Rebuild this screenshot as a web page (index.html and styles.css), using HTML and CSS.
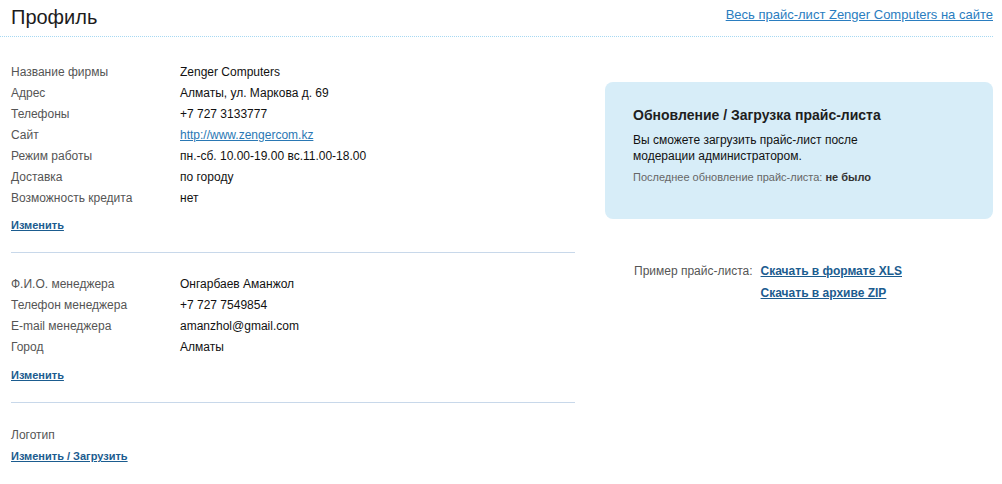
FILE: index.html
```html
<!DOCTYPE html>
<html lang="ru">
<head>
<meta charset="utf-8">
<title>Профиль</title>
<link rel="stylesheet" href="styles.css">
</head>
<body>
<header class="top">
  <h1 class="title">Профиль</h1>
  <a class="site-link" href="#">Весь прайс-лист Zenger Computers на сайте</a>
</header>
<main class="main">
  <div class="left">
    <section class="sec sec-first">
      <div class="row"><span class="lbl">Название фирмы</span><span class="val">Zenger Computers</span></div>
      <div class="row"><span class="lbl">Адрес</span><span class="val">Алматы, ул. Маркова д. 69</span></div>
      <div class="row"><span class="lbl">Телефоны</span><span class="val">+7 727 3133777</span></div>
      <div class="row"><span class="lbl">Сайт</span><span class="val"><a class="plain-link" href="#">http://www.zengercom.kz</a></span></div>
      <div class="row"><span class="lbl">Режим работы</span><span class="val">пн.-сб. 10.00-19.00 вс.11.00-18.00</span></div>
      <div class="row"><span class="lbl">Доставка</span><span class="val">по городу</span></div>
      <div class="row"><span class="lbl">Возможность кредита</span><span class="val">нет</span></div>
      <a class="edit" href="#">Изменить</a>
    </section>
    <section class="sec sec-second">
      <div class="row"><span class="lbl">Ф.И.О. менеджера</span><span class="val">Онгарбаев Аманжол</span></div>
      <div class="row"><span class="lbl">Телефон менеджера</span><span class="val">+7 727 7549854</span></div>
      <div class="row"><span class="lbl">E-mail менеджера</span><span class="val">amanzhol@gmail.com</span></div>
      <div class="row"><span class="lbl">Город</span><span class="val">Алматы</span></div>
      <a class="edit" href="#">Изменить</a>
    </section>
    <section class="sec sec-third">
      <div class="row"><span class="lbl">Логотип</span></div>
      <a class="edit edit-logo" href="#">Изменить / Загрузить</a>
    </section>
  </div>
  <aside class="right">
    <div class="upload-box">
      <h2 class="box-title">Обновление / Загрузка прайс-листа</h2>
      <p class="box-text">Вы сможете загрузить прайс-лист после<br>модерации администратором.</p>
      <p class="box-note">Последнее обновление прайс-листа: <b>не было</b></p>
    </div>
    <div class="sample">
      <span class="sample-lbl">Пример прайс-листа:</span>
      <a class="dl" href="#">Скачать в формате XLS</a>
      <span></span>
      <a class="dl" href="#">Скачать в архиве ZIP</a>
    </div>
  </aside>
</main>
</body>
</html>
```
FILE: styles.css
```css
* { box-sizing: border-box; }
html, body { margin: 0; padding: 0; background: #fff; }
body {
  font-family: "Liberation Sans", Arial, sans-serif;
  color: #111;
  width: 1002px;
}
.top {
  display: flex;
  justify-content: space-between;
  align-items: flex-start;
  height: 37px;
  padding: 0 9px 0 11px;
  background: repeating-linear-gradient(to right, #a6d8f2 0 1px, #ffffff 1px 2px) left bottom / 993px 1px no-repeat;
}
.title {
  margin: 0;
  padding-top: 5px;
  font-size: 20px;
  line-height: 24px;
  font-weight: normal;
  color: #1c1c1c;
}
.site-link {
  margin-top: 7px;
  font-size: 13px;
  line-height: 16px;
  color: #2a7dc0;
}
.main {
  display: flex;
  align-items: flex-start;
}
.left {
  width: 575px;
  padding-left: 11px;
}
.sec { border-bottom: 1px solid #c8d8ea; }
.sec-first { padding: 25px 0 19px; }
.sec-second { padding: 21px 0 19px; }
.sec-third { padding: 22px 0 0; border-bottom: none; }
.row {
  display: flex;
  font-size: 12px;
  line-height: 21px;
}
.lbl { width: 169px; color: #555; flex: none; }
.val { color: #111; }
.plain-link { color: #2a78b4; }
.edit {
  display: block;
  margin-top: 8px;
  font-size: 11px;
  line-height: 16px;
  font-weight: bold;
  color: #1b5c8f;
  width: max-content;
}
.sec-second .edit { margin-top: 9px; }
.sec-third .edit-logo { margin-top: 2px; }
.right {
  margin-left: 30px;
  width: 388px;
  padding-top: 45px;
}
.upload-box {
  height: 137px;
  background: #d7edf8;
  border-radius: 8px;
  padding: 24px 20px 0 28px;
}
.box-title {
  margin: 0;
  font-size: 14px;
  line-height: 18px;
  font-weight: bold;
  color: #1e1e1e;
}
.box-text {
  margin: 8px 0 0;
  font-size: 12px;
  line-height: 16px;
  color: #111;
}
.box-note {
  margin: 5px 0 0;
  font-size: 11px;
  line-height: 16px;
  color: #666;
}
.box-note b { color: #333; }
.sample {
  display: grid;
  grid-template-columns: auto auto;
  justify-content: start;
  column-gap: 8px;
  row-gap: 6px;
  margin-top: 44px;
  padding-left: 29px;
  font-size: 12px;
  line-height: 16px;
}
.sample-lbl { color: #555; }
.dl {
  font-weight: bold;
  color: #1b5c8f;
}
```
